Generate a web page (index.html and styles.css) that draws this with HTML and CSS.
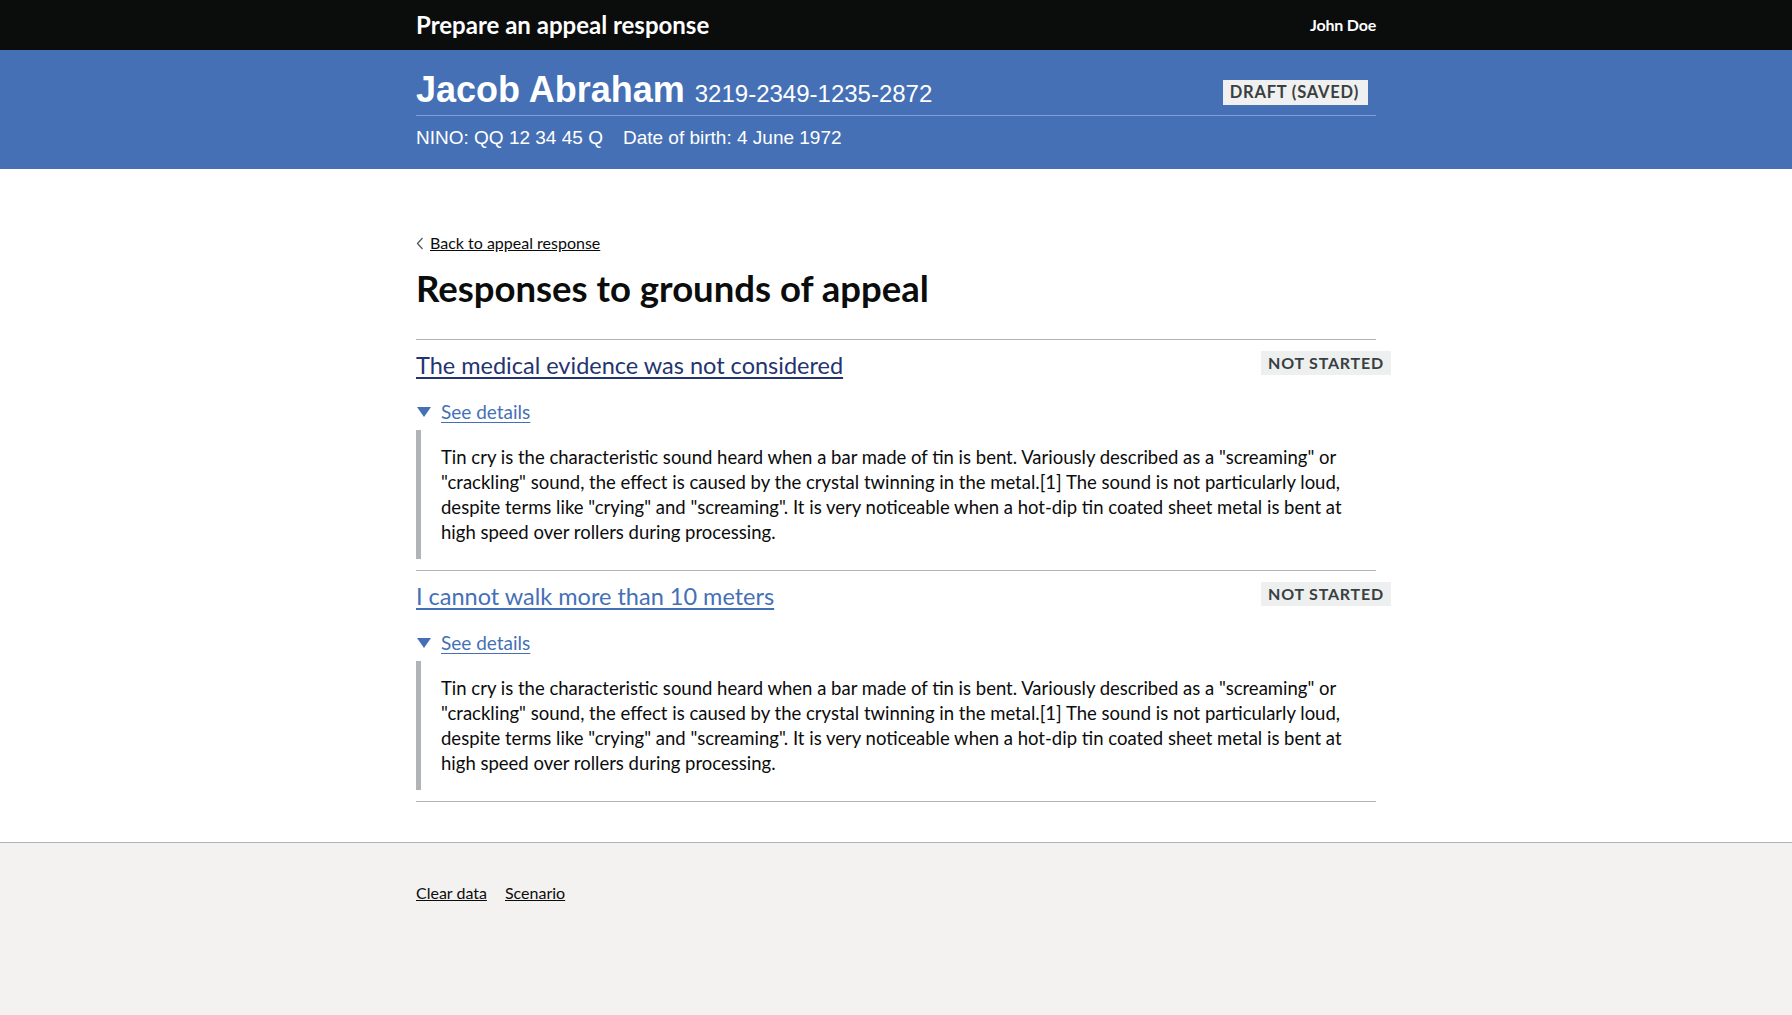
FILE: index.html
```html
<!DOCTYPE html>
<html lang="en">
<head>
<meta charset="utf-8">
<title>Responses to grounds of appeal</title>
<link rel="stylesheet" href="styles.css">
</head>
<body>
<header class="topbar">
  <div class="container topbar-inner">
    <span class="service">Prepare an appeal response</span>
    <span class="user">John Doe</span>
  </div>
</header>
<div class="band">
  <div class="container">
    <div class="band-top">
      <h2 class="person"><span class="name">Jacob Abraham</span><span class="ref">3219-2349-1235-2872</span></h2>
      <strong class="tag tag-draft">Draft (saved)</strong>
    </div>
    <div class="band-meta">
      <span>NINO: QQ 12 34 45 Q</span>
      <span>Date of birth: 4 June 1972</span>
    </div>
  </div>
</div>
<main class="container main">
  <a class="back" href="#"><svg class="chev" viewBox="0 0 8 13" width="8" height="13" aria-hidden="true"><path d="M6.5 1 L1.5 6.5 L6.5 12" fill="none" stroke="#505a5f" stroke-width="1.3"/></svg>Back to appeal response</a>
  <h1 class="title">Responses to grounds of appeal</h1>
  <ul class="grounds">
    <li class="ground">
      <div class="ground-head">
        <a class="ground-link visited" href="#">The medical evidence was not considered</a>
        <strong class="tag tag-status">Not started</strong>
      </div>
      <details class="details" open>
        <summary class="summary"><span class="summary-text">See details</span></summary>
        <div class="details-text">Tin cry is the characteristic sound heard when a bar made of tin is bent. Variously described as a "screaming" or "crackling" sound, the effect is caused by the crystal twinning in the metal.[1] The sound is not particularly loud, despite terms like "crying" and "screaming". It is very noticeable when a hot-dip tin coated sheet metal is bent at high speed over rollers during processing.</div>
      </details>
    </li>
    <li class="ground">
      <div class="ground-head">
        <a class="ground-link" href="#">I cannot walk more than 10 meters</a>
        <strong class="tag tag-status">Not started</strong>
      </div>
      <details class="details" open>
        <summary class="summary"><span class="summary-text">See details</span></summary>
        <div class="details-text">Tin cry is the characteristic sound heard when a bar made of tin is bent. Variously described as a "screaming" or "crackling" sound, the effect is caused by the crystal twinning in the metal.[1] The sound is not particularly loud, despite terms like "crying" and "screaming". It is very noticeable when a hot-dip tin coated sheet metal is bent at high speed over rollers during processing.</div>
      </details>
    </li>
  </ul>
</main>
<footer class="footer">
  <div class="container footer-links">
    <a href="#">Clear data</a>
    <a href="#">Scenario</a>
  </div>
</footer>
</body>
</html>
```

FILE: styles.css
```css
* { box-sizing: border-box; }
html, body { margin: 0; padding: 0; }
body {
  font-family: Lato, "Noto Sans", Arial, sans-serif;
  color: #0b0c0c;
  background: #fff;
  min-height: 100vh;
  display: flex;
  flex-direction: column;
}
.container { width: 960px; margin: 0 auto; }

/* top bar */
.topbar { background: #0b0c0c; color: #fff; height: 50px; }
.topbar-inner { height: 50px; display: flex; align-items: center; justify-content: space-between; padding-bottom: 2px; }
.service { font-weight: 700; font-size: 24px; }
.user { font-weight: 700; font-size: 16px; letter-spacing: -0.2px; }

/* blue band */
.band { background: #4570b6; color: #fff; padding: 20px 0 19px; }
.band-top { display: flex; justify-content: space-between; align-items: flex-start; border-bottom: 1px solid #7d9edb; padding-bottom: 5px; }
.person { margin: 0; height: 40px; line-height: 40px; font-family: "Liberation Sans", Arial, sans-serif; display: flex; align-items: baseline; }
.name { font-size: 36px; font-weight: 700; }
.ref { font-size: 24px; font-weight: 400; margin-left: 10px; }
.tag { display: inline-block; font-weight: 700; text-transform: uppercase; color: #383f43; letter-spacing: 0.8px; }
.tag-draft { background: #f0f0f0; font-size: 16.5px; line-height: 25px; height: 25px; padding: 0 9px 0 7px; margin-top: 10px; margin-right: 8px; }
.band-meta { margin-top: 10px; font-family: "Liberation Sans", Arial, sans-serif; font-size: 19px; line-height: 24px; display: flex; gap: 20px; }

/* main */
.main { padding-top: 64px; padding-bottom: 40px; }
.back { display: inline-flex; align-items: center; gap: 6px; font-size: 16px; line-height: 20px; color: #0b0c0c; text-decoration: underline; }
.title { margin: 15px 0 31px; font-size: 36.5px; line-height: 40px; font-weight: 700; }
.grounds { list-style: none; margin: 0; padding: 0; }
.ground { border-top: 1px solid #b1b4b6; padding: 10px 0 11px; }
.ground:last-child { border-bottom: 1px solid #b1b4b6; }
.ground-head { display: flex; justify-content: space-between; align-items: flex-start; }
.ground-link { font-size: 23.5px; line-height: 30px; color: #4570b6; text-decoration: underline; text-underline-offset: 3px; }
.ground-link.visited { color: #243470; text-decoration-thickness: 2px; }
.tag-status { background: #eeefef; font-size: 16px; line-height: 24px; height: 24px; padding: 0 7px; margin-top: 1px; margin-right: -15px; }

.details { margin-top: 19px; }
.summary { list-style: none; cursor: pointer; position: relative; padding-left: 25px; font-size: 19px; line-height: 25px; color: #4570b6; }
.summary::-webkit-details-marker { display: none; }
.summary::before { content: ""; position: absolute; left: 1px; top: 8px; border-left: 7px solid transparent; border-right: 7px solid transparent; border-top: 10px solid #4570b6; }
.summary-text { text-decoration: underline; text-underline-offset: 3px; }
.details-text { margin-top: 6px; border-left: 5px solid #b1b4b6; padding: 15px 15px 14px 20px; font-size: 18.5px; line-height: 25px; }

/* footer */
.footer { flex: 1; background: #f3f2f1; border-top: 1px solid #b1b4b6; padding: 40px 0; }
.footer-links { display: flex; gap: 18px; }
.footer-links a { color: #0b0c0c; font-size: 16px; line-height: 20px; text-decoration: underline; }
```
